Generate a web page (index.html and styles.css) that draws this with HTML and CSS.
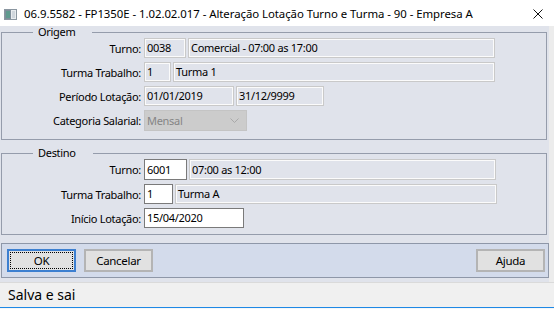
FILE: index.html
```html
<!DOCTYPE html>
<html lang="pt">
<head>
<meta charset="utf-8">
<title>Alteração Lotação Turno e Turma</title>
<link rel="stylesheet" href="styles.css">
</head>
<body>
<div class="window">
  <div class="titlebar">
    <svg class="app-icon" width="13" height="11" viewBox="0 0 13 11">
      <rect x="0.5" y="0.5" width="12" height="10" fill="#e8ecef" stroke="#8a96a0"/>
      <rect x="1" y="1" width="6" height="9" fill="#7f8e9a"/>
      <rect x="2" y="2" width="4" height="7" fill="#5f9a8e"/>
      <rect x="8" y="2" width="3" height="7" fill="#cfd6dc"/>
    </svg>
    <span class="title">06.9.5582 - FP1350E - 1.02.02.017 - Alteração Lotação Turno e Turma - 90 - Empresa A</span>
    <svg class="close" width="10" height="10" viewBox="0 0 10 10">
      <path d="M0.5 0.5 L9.5 9.5 M9.5 0.5 L0.5 9.5" stroke="#111" stroke-width="1" fill="none"/>
    </svg>
  </div>
  <div class="client">
    <div class="content">
      <fieldset class="group origem">
        <legend>Origem</legend>
        <div class="form">
          <span class="label">Turno:</span>
          <div class="fields"><span class="box ro w42">0038</span><span class="box ro w307">Comercial - 07:00 as 17:00</span></div>
          <span class="label">Turma Trabalho:</span>
          <div class="fields"><span class="box ro w27">1</span><span class="box ro w322">Turma 1</span></div>
          <span class="label">Período Lotação:</span>
          <div class="fields"><span class="box ro w90">01/01/2019</span><span class="box ro w88">31/12/9999</span></div>
          <span class="label">Categoria Salarial:</span>
          <div class="fields"><span class="combo"><span>Mensal</span><svg width="9" height="5" viewBox="0 0 9 5"><path d="M0.5 0.5 L4.5 4.5 L8.5 0.5" stroke="#a9a9a9" fill="none"/></svg></span></div>
        </div>
      </fieldset>
      <fieldset class="group destino">
        <legend>Destino</legend>
        <div class="form">
          <span class="label">Turno:</span>
          <div class="fields"><span class="box ed w43 h21">6001</span><span class="box ro w307 h21">07:00 as 12:00</span></div>
          <span class="label">Turma Trabalho:</span>
          <div class="fields"><span class="box ed w29">1</span><span class="box ro w322">Turma A</span></div>
          <span class="label">Início Lotação:</span>
          <div class="fields"><span class="box ed w100">15/04/2020</span></div>
        </div>
      </fieldset>
      <div class="buttonbar">
        <button class="btn default"><span>OK</span></button>
        <button class="btn">Cancelar</button>
        <span class="spacer"></span>
        <button class="btn">Ajuda</button>
      </div>
    </div>
    <div class="edge"></div>
  </div>
  <div class="status">Salva e sai</div>
  <div class="taskbar"></div>
</div>
</body>
</html>
```
FILE: styles.css
```css
* { box-sizing: border-box; }
html, body { margin: 0; padding: 0; }
body {
  width: 554px;
  height: 309px;
  overflow: hidden;
  background: #f0f0f0;
  font-family: "Noto Sans", "Liberation Sans", sans-serif;
  font-size: 11px;
  letter-spacing: -0.3px;
  color: #000;
}
.window { display: flex; flex-direction: column; height: 309px; }
.titlebar {
  height: 26px;
  background: #fff;
  display: flex;
  align-items: center;
  padding: 0 11px 0 4px;
}
.app-icon { flex: none; margin-top: 2px; }
.title { margin-left: 7px; font-size: 11.4px; letter-spacing: -0.05px; color: #000; flex: 1; white-space: nowrap; margin-top: 1px; }
.close { flex: none; margin-top: 1px; }

.client { display: flex; height: 256px; }
.content {
  flex: 1;
  background: #e0e3eb;
  padding: 0 0 0 1px;
  display: flex;
  flex-direction: column;
}
.edge { width: 5px; background: #ececec; }

.group {
  margin: 0 2px 0 0;
  padding: 0;
  border: 1px solid #959cab;
  min-width: 0;
}
.group legend {
  margin-left: 31px;
  padding: 0 17px 0 5px;
  line-height: 12px;
  font-size: 11px;
  color: #000;
}
.origem { padding-bottom: 8px; }
.destino { margin-top: 7px; padding-bottom: 6px; }

.form {
  display: grid;
  grid-template-columns: 139px 1fr;
  column-gap: 3px;
  row-gap: 4px;
  align-items: center;
}
.label { text-align: right; white-space: nowrap; }
.fields { display: flex; gap: 2px; align-items: center; }

.box {
  height: 20px;
  line-height: 18px;
  padding: 0 2px;
  white-space: nowrap;
  overflow: hidden;
  flex: none;
}
.ro {
  border: 1px solid #c9c9c9;
  box-shadow: inset 0 0 0 1px #fbfbfb;
  background: #e0e3eb;
}
.ed {
  border: 1px solid #7a7a7a;
  background: #fff;
}
.h21 { height: 21px; line-height: 19px; }
.w27 { width: 27px; }
.w29 { width: 29px; }
.w42 { width: 42px; }
.w43 { width: 43px; }
.w88 { width: 88px; }
.w90 { width: 90px; }
.w100 { width: 100px; }
.w307 { width: 307px; }
.w322 { width: 322px; }

.combo {
  width: 103px;
  height: 21px;
  background: #cccccc;
  border: 1px solid #c4c4c4;
  color: #858585;
  display: flex;
  align-items: center;
  justify-content: space-between;
  padding: 0 7px 0 2px;
}

.buttonbar {
  margin: 8px 0 0 0;
  border: 1px solid #8e97a8;
  background: #d3dbeb;
  padding: 5px 3px 5px 5px;
  display: flex;
  gap: 8px;
}
.spacer { flex: 1; }
.btn {
  width: 69px;
  height: 23px;
  background: #e1e1e1;
  border: 2px solid #b4b4b4;
  font-family: inherit;
  font-size: 11.5px;
  letter-spacing: -0.3px;
  color: #000;
  padding: 0;
  margin: 0;
}
.btn.default {
  border: 2px solid #3c7fd0;
  padding: 1px;
}
.btn.default span {
  display: flex;
  align-items: center;
  justify-content: center;
  height: 100%;
  outline: 1px dotted #000;
  outline-offset: -1px;
}

.status {
  border-top: 1px solid #dadada;
  height: 25px;
  background: #f0f0f0;
  font-size: 14px;
  letter-spacing: 0;
  padding: 2px 0 0 8px;
}
.taskbar {
  height: 2px;
  border-top: 1px solid #1e88e5;
  background: #f4f6f8;
}
```
